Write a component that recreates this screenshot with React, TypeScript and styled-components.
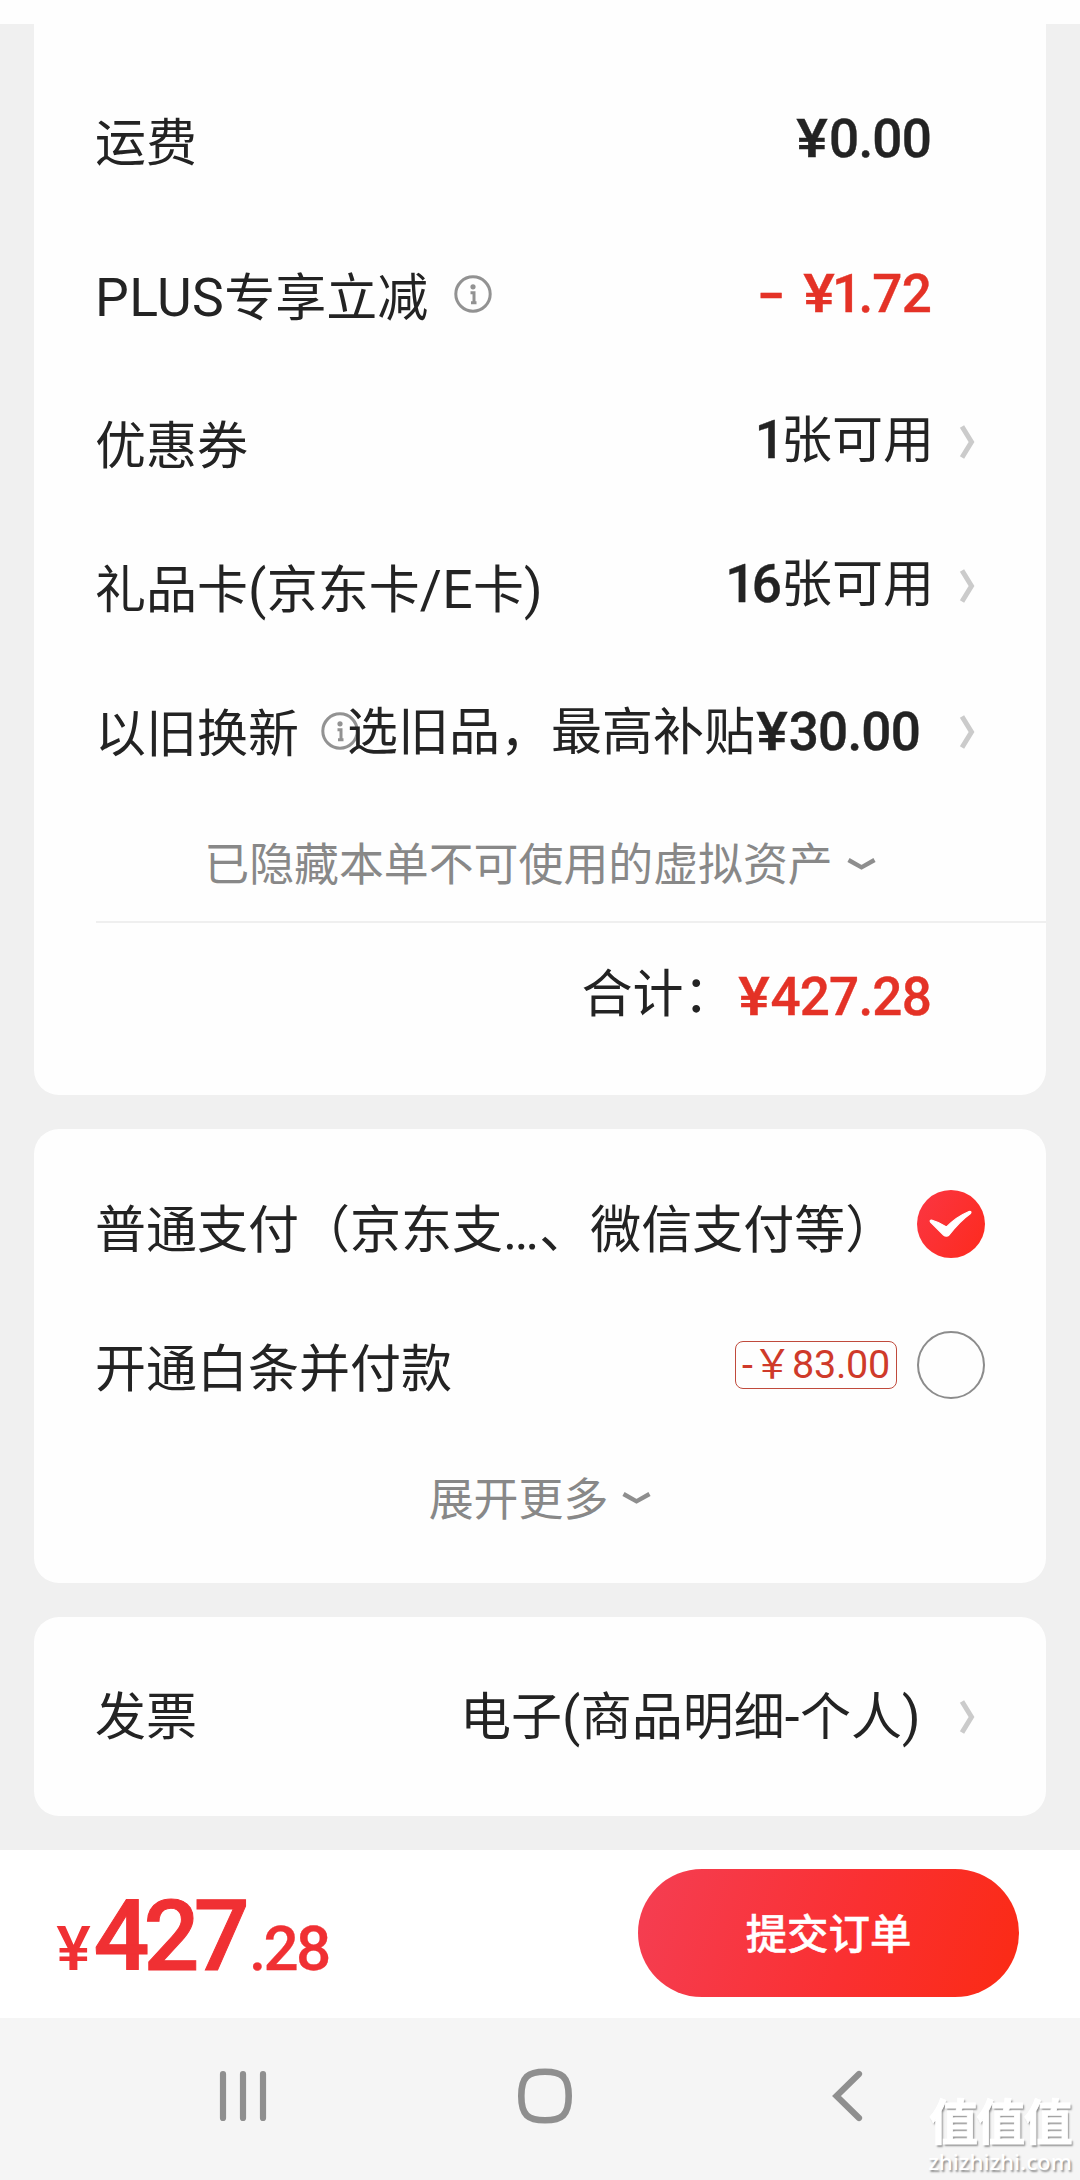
import React from 'react';
import styled, { createGlobalStyle, css } from 'styled-components';

const GlobalStyle = createGlobalStyle`
  * { box-sizing: border-box; }
  body {
    margin: 0;
    background: #f0f0f0;
    font-family: Roboto, 'Noto Sans CJK SC', sans-serif;
    color: #232323;
  }
`;

const Screen = styled.main`
  width: 1080px;
  height: 2180px;
  display: flex;
  flex-direction: column;
  background: #f0f0f0;
  overflow: hidden;
`;

const TopStrip = styled.div`
  height: 24px;
  flex: none;
  background: #fefefe;
`;

const Cards = styled.div`
  flex: 1;
  display: flex;
  flex-direction: column;
  gap: 34px;
  padding: 0 34px;
`;

const Card = styled.section<{ $height: number; $padTop: number; $open?: boolean }>`
  height: ${p => p.$height}px;
  padding-top: ${p => p.$padTop}px;
  flex: none;
  display: flex;
  flex-direction: column;
  background: #fefefe;
  border-radius: ${p => (p.$open ? '0 0 25px 25px' : '25px')};
`;

const Row = styled.div<{ $height: number }>`
  height: ${p => p.$height}px;
  flex: none;
  display: flex;
  align-items: center;
  padding-left: 61px;
  font-size: 51px;
  line-height: 60px;
  white-space: nowrap;
`;

const Label = styled.div<{ $dy?: number }>`
  flex: 1;
  min-width: 0;
  display: flex;
  align-items: center;
  margin-top: ${p => (p.$dy ?? 0) * 2}px;
`;

const Value = styled.div<{ $dy?: number; $end?: number }>`
  position: relative;
  margin-top: ${p => (p.$dy ?? 0) * 2}px;
  margin-right: ${p => p.$end ?? 0}px;
`;

const Latin = styled.span`
  font-size: 53.5px;
  letter-spacing: 0.4px;
`;

const Figure = styled.span<{ $red?: boolean }>`
  font-size: 53px;
  font-weight: 500;
  letter-spacing: -0.8px;
  -webkit-text-stroke: 0.4px currentColor;
  color: ${p => (p.$red ? '#e43226' : 'inherit')};
`;

const Glyph = styled.span<{ $kind: string }>`
  ${p => p.$kind === '¥' && css`
    display: inline-block;
    transform: scaleX(1.12);
    margin: 0 3.5px 0 3px;
  `}
  ${p => p.$kind === '1' && css`
    margin: 0 -3px 0 -4px;
  `}
  ${p => p.$kind === '-' && css`
    display: inline-block;
    transform: scaleX(1.5);
    margin: 0 23px 0 0;
  `}
`;

const Amount = ({ text, red }: { text: string; red?: boolean }) => (
  <Figure $red={red}>
    {text.split(/([¥1-])/).filter(Boolean).map((part, i) => (
      <Glyph key={i} $kind={part}>{part}</Glyph>
    ))}
  </Figure>
);

const Trail = styled.div`
  width: 114px;
  flex: none;
  display: flex;
  padding-left: 27px;
`;

const InfoSlot = styled.span<{ $gap: number; $dy: number }>`
  display: flex;
  margin-left: ${p => p.$gap}px;
  margin-top: ${p => p.$dy * 2}px;
`;

const MoreRow = styled.div<{ $height: number }>`
  height: ${p => p.$height}px;
  flex: none;
  display: flex;
  align-items: center;
  justify-content: center;
  gap: 14px;
  font-size: 44.9px;
  line-height: 54px;
  color: #888;
  white-space: nowrap;
`;

const MoreText = styled.span`
  margin-top: 5px;
`;

const Divider = styled.hr`
  width: 950px;
  height: 2px;
  flex: none;
  margin: 0 0 0 62px;
  border: 0;
  background: #efefef;
`;

const TotalLabel = styled.span`
  margin-left: auto;
  margin-right: 2px;
`;

const Coupon = styled.span`
  height: 48px;
  display: flex;
  align-items: center;
  justify-content: center;
  width: 162px;
  margin-right: 20px;
  border: 1.5px solid #c04a3c;
  border-radius: 8px;
  color: #cf3a2a;
  font-size: 39.5px;
  letter-spacing: -0.2px;
  line-height: 44px;
`;

const RadioSlot = styled.div`
  flex: none;
  display: flex;
  margin-right: 61px;
`;

const EmptyRadio = styled.span`
  width: 68px;
  height: 68px;
  border: 2px solid #8c8c8c;
  border-radius: 50%;
`;

const PayBar = styled.footer`
  height: 168px;
  flex: none;
  display: flex;
  align-items: center;
  justify-content: space-between;
  padding: 0 61px 2px 56px;
  background: #fff;
`;

const BigPrice = styled.div`
  display: flex;
  align-items: baseline;
  color: #f03033;
  font-weight: 500;
  line-height: 110px;
  padding-top: 20px;
`;

const Currency = styled.span`
  font-size: 62px;
  transform: scaleX(1.05);
  margin-left: 1px;
`;

const PriceLarge = styled.span`
  font-size: 98.5px;
  letter-spacing: -5.8px;
  margin-left: 3.5px;
  -webkit-text-stroke: 1px currentColor;
`;

const Cents = styled.span`
  font-size: 62px;
  letter-spacing: -2.7px;
  margin-left: 5px;
  -webkit-text-stroke: 0.3px currentColor;
`;

const Submit = styled.button`
  width: 381px;
  height: 128px;
  padding: 0 0 4px;
  border: 0;
  border-radius: 64px;
  background: linear-gradient(108deg, #f53d50 5%, #fa3032 55%, #fb2b17 95%);
  color: #fff;
  font-family: 'Noto Sans CJK SC', sans-serif;
  font-size: 41.4px;
  font-weight: 500;
  -webkit-text-stroke: 0.5px #fff;
  line-height: 60px;
`;

const NavBar = styled.nav`
  position: relative;
  height: 162px;
  flex: none;
  display: flex;
  align-items: center;
  padding: 0 0 6px 214px;
  background: #f5f5f5;
`;

const NavSlot = styled.span<{ $gap: number }>`
  display: flex;
  margin-left: ${p => p.$gap}px;
`;

const Watermark = styled.div`
  position: absolute;
  right: 8px;
  bottom: 5px;
  width: 144px;
  display: flex;
  flex-direction: column;
  align-items: center;
  gap: 4px;
  color: #fff;
  text-shadow: 1.5px 1.5px 2px rgba(0, 0, 0, 0.42);
  white-space: nowrap;
`;

const WatermarkName = styled.span`
  font: 700 49px/52px 'Noto Sans CJK SC', sans-serif;
  letter-spacing: -1.6px;
  -webkit-text-stroke: 0.8px #fff;
`;

const WatermarkSite = styled.span`
  font: 500 22.3px/26px 'Noto Sans', sans-serif;
`;

const Chevron = () => (
  <svg width="18" height="36" viewBox="0 0 18 36" fill="none">
    <path d="M3 2.5 12.5 18 3 33.5" stroke="#cbcbcb" strokeWidth="5" />
  </svg>
);

const ChevronDown = () => (
  <svg width="29" height="14" viewBox="0 0 29 14" fill="none">
    <path d="M1.5 3 14.5 10.3 27.5 3" stroke="#8e8e8e" strokeWidth="4.4" />
  </svg>
);

const Info = () => (
  <svg width="38" height="38" viewBox="0 0 38 38" fill="none">
    <circle cx="19" cy="19" r="17.2" stroke="#929292" strokeWidth="3" />
    <circle cx="19" cy="11.8" r="2.6" fill="#929292" />
    <path d="M16.500 17.700h3.500v10M17 27.800h5.500" stroke="#929292" strokeWidth="3" />
  </svg>
);

const Checked = () => (
  <svg width="68" height="68" viewBox="0 0 68 68">
    <defs>
      <linearGradient id="check" x1="0" y1="0.2" x2="1" y2="0.8">
        <stop offset="0" stopColor="#fb3540" />
        <stop offset="1" stopColor="#fd2b20" />
      </linearGradient>
    </defs>
    <circle cx="34" cy="34" r="34" fill="url(#check)" />
    <path
      d="M14.5 30Q22 32 29.5 37Q39 27 52 21.5Q55 21 53.5 23.5Q43 31 32.5 44.5Q29.5 47.5 26.5 45Q19 37.5 13.5 32Q12.5 30 14.5 30Z"
      fill="#fff"
      stroke="#fff"
      strokeWidth="1.2"
      strokeLinejoin="round"
    />
  </svg>
);

const Recents = () => (
  <svg width="58" height="56" viewBox="0 0 58 56" stroke="#8f8f8f" strokeWidth="6.2" strokeLinecap="round">
    <path d="M9 6v44M29 6v44M49 6v44" />
  </svg>
);

const Home = () => (
  <svg width="56" height="56" viewBox="0 0 56 56" fill="none">
    <path
      d="M28 3.7C45 3.7 51.7 9 51.7 28S45 52.3 28 52.3 4.3 47 4.3 28 11 3.7 28 3.7Z"
      stroke="#8f8f8f"
      strokeWidth="6.6"
    />
  </svg>
);

const Back = () => (
  <svg width="34" height="56" viewBox="0 0 34 56" fill="none">
    <path d="M29 6 6.5 28 29 50" stroke="#8f8f8f" strokeWidth="6.2" strokeLinecap="round" />
  </svg>
);

export default function App() {
  return (
    <Screen>
      <GlobalStyle />
      <TopStrip />
      <Cards>
        <Card $height={1071} $padTop={38} $open>
          <Row $height={156}>
            <Label $dy={3.5}>运费</Label>
            <Value $dy={-1} $end={1}><Amount text="¥0.00" /></Value>
            <Trail />
          </Row>
          <Row $height={152}>
            <Label $dy={4}>
              <span><Latin>PLUS</Latin>专享立减</span>
              <InfoSlot $gap={26} $dy={-4}><Info /></InfoSlot>
            </Label>
            <Value $end={1}><Amount red text="-¥1.72" /></Value>
            <Trail />
          </Row>
          <Row $height={144}>
            <Label $dy={4.5}>优惠券</Label>
            <Value $dy={-1.5} $end={-2}><Amount text="1" />张可用</Value>
            <Trail><Chevron /></Trail>
          </Row>
          <Row $height={144}>
            <Label $dy={4.5}><span>礼品卡<Latin>(</Latin>京东卡<Latin>/E</Latin>卡<Latin>)</Latin></span></Label>
            <Value $dy={-1.5} $end={-2}><Amount text="16" />张可用</Value>
            <Trail><Chevron /></Trail>
          </Row>
          <Row $height={148}>
            <Label $dy={3}>
              以旧换新
              <InfoSlot $gap={22} $dy={-4}><Info /></InfoSlot>
            </Label>
            <Value $dy={0.5} $end={12}>选旧品，最高补贴<Amount text="¥30.00" /></Value>
            <Trail><Chevron /></Trail>
          </Row>
          <MoreRow $height={115}>
            <MoreText>已隐藏本单不可使用的虚拟资产</MoreText>
            <ChevronDown />
          </MoreRow>
          <Divider />
          <Row $height={144}>
            <TotalLabel>合计：</TotalLabel>
            <Value $dy={2} $end={1}><Amount red text="¥427.28" /></Value>
            <Trail />
          </Row>
        </Card>

        <Card $height={454} $padTop={24}>
          <Row $height={142}>
            <Label $dy={7}>普通支付（京东支<Latin>…</Latin>、微信支付等）</Label>
            <RadioSlot><Checked /></RadioSlot>
          </Row>
          <Row $height={140}>
            <Label $dy={5}>开通白条并付款</Label>
            <Coupon>-￥83.00</Coupon>
            <RadioSlot><EmptyRadio /></RadioSlot>
          </Row>
          <MoreRow $height={126}>
            <MoreText>展开更多</MoreText>
            <ChevronDown />
          </MoreRow>
        </Card>

        <Card $height={199} $padTop={0}>
          <Row $height={199}>
            <Label $dy={1.5}>发票</Label>
            <Value $dy={1} $end={11}>
              电子<Latin>(</Latin>商品明细<Latin>-</Latin>个人<Latin>)</Latin>
            </Value>
            <Trail><Chevron /></Trail>
          </Row>
        </Card>
      </Cards>

      <PayBar>
        <BigPrice>
          <Currency>¥</Currency>
          <PriceLarge>427</PriceLarge>
          <Cents>.28</Cents>
        </BigPrice>
        <Submit>提交订单</Submit>
      </PayBar>

      <NavBar>
        <NavSlot $gap={0}><Recents /></NavSlot>
        <NavSlot $gap={245}><Home /></NavSlot>
        <NavSlot $gap={257}><Back /></NavSlot>
        <Watermark>
          <WatermarkName>值值值</WatermarkName>
          <WatermarkSite>zhizhizhi.com</WatermarkSite>
        </Watermark>
      </NavBar>
    </Screen>
  );
}
